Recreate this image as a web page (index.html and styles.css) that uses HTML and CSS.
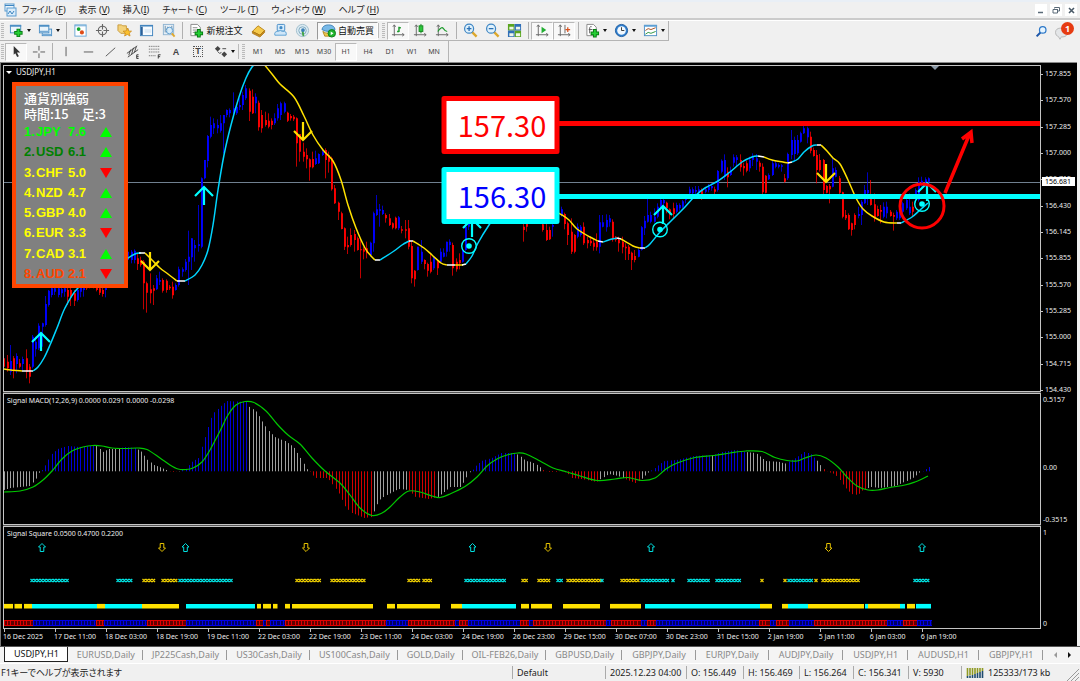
FILE: index.html
```html
<!DOCTYPE html>
<html lang="ja">
<head>
<meta charset="utf-8">
<title>USDJPY,H1</title>
<link rel="stylesheet" href="styles.css">
</head>
<body>
<header class="menubar">
  <svg class="app-icon" viewBox="0 0 14 14"><rect x="2" y="1" width="9" height="7" fill="#eef6fc" stroke="#5a9bd0"/><rect x="4" y="5" width="9" height="8" fill="#d9ecfa" stroke="#5a9bd0"/><path d="M2 2.500h9M5 11l2-3 2 3 2-3" fill="none" stroke="#3c84c0"/></svg>
  <nav class="menu">
    <button>ファイル (<u>F</u>)</button><button>表示 (<u>V</u>)</button><button>挿入(<u>I</u>)</button><button>チャート (<u>C</u>)</button><button>ツール (<u>T</u>)</button><button>ウィンドウ (<u>W</u>)</button><button>ヘルプ (<u>H</u>)</button>
  </nav>
  <div class="window-controls">
    <button aria-label="最小化"><svg viewBox="0 0 12 12"><path d="M3 8.500h5" stroke="#5a6a78" stroke-width="1.500"/></svg></button>
    <button aria-label="元に戻す"><svg viewBox="0 0 12 12"><path d="M4.500 4.500v-1h5v3.500h-1.500M3 5.500h4.500v3.500h-4.500zM3 5.500h5" fill="none" stroke="#5a6a78"/></svg></button>
    <button aria-label="閉じる"><svg viewBox="0 0 12 12"><path d="M4 4l5 5M9 4l-5 5" stroke="#4a5a68" stroke-width="1.600"/></svg></button>
  </div>
</header>

<div class="toolbar toolbar-main">
  <div class="tools">
    <span class="grip"></span>
    <button class="tool drop" aria-label="新規チャート"><svg viewBox="0 0 16 16"><rect x="1.500" y="2.500" width="11" height="8" fill="#eef6fc" stroke="#4c8fc4"/><path d="M1 3h12" stroke="#4c8fc4" stroke-width="2"/><path d="M10 6v9M5.500 10.500h9" stroke="#087d14" stroke-width="4"/><path d="M10 7v7M6.500 10.500h7" stroke="#25cf35" stroke-width="2"/></svg><i></i></button>
    <button class="tool drop" aria-label="チャートの組表示"><svg viewBox="0 0 16 16"><rect x="4.500" y="6.500" width="10" height="7" fill="#d5e8f6" stroke="#4c8fc4"/><rect x="1.500" y="2.500" width="10" height="8" fill="#eaf4fb" stroke="#4c8fc4"/><path d="M1 3h11" stroke="#4c8fc4" stroke-width="2"/><path d="M2 9h9M5 12.500h9" stroke="#76aad5" stroke-width="1.500"/></svg><i></i></button>
    <span class="sep"></span>
    <button class="tool" aria-label="気配値"><svg viewBox="0 0 16 16"><rect x="2" y="2" width="12" height="12" fill="#fff" stroke="#69a6d5"/><path d="M2 3h12" stroke="#69a6d5"/><circle cx="6" cy="6.500" r="2" fill="#14a52a"/><circle cx="9.500" cy="10" r="2.200" fill="#e04b16"/></svg></button>
    <button class="tool" aria-label="データウィンドウ"><svg viewBox="0 0 16 16"><circle cx="8" cy="8" r="4.500" fill="none" stroke="#666" stroke-width="1.200"/><path d="M8 1v6M8 9v6M1 8h6M9 8h6" stroke="#666" stroke-width="1.200"/></svg></button>
    <button class="tool" aria-label="ナビゲーター"><svg viewBox="0 0 16 16"><path d="M1 2h4l1 1h4v3h2v5H4L1 8z" fill="#f4d27a" stroke="#c99a3a"/><path d="M11 5.500l1.300 3 3.200.2-2.400 2 .8 3.200-2.900-1.700-2.900 1.700.8-3.200-2.400-2 3.200-.2z" fill="#fbc02d" stroke="#c98a1c" stroke-width=".8"/></svg></button>
    <button class="tool" aria-label="ターミナル"><svg viewBox="0 0 16 16"><rect x="1.500" y="2.500" width="13" height="11" fill="#f6fbff" stroke="#3f83bd"/><path d="M2 3h12" stroke="#3f83bd" stroke-width="1.500"/><path d="M3 4v9" stroke="#2a5f97" stroke-width="2"/><path d="M6 7.500h7M6 9.500h7" stroke="#c6dcef"/></svg></button>
    <button class="tool" aria-label="ストラテジーテスター"><svg viewBox="0 0 16 16"><rect x="2.500" y="1.500" width="11" height="11" fill="#e6eff6" stroke="#8eb3d1"/><path d="M4.500 3v7M7 4v6M11.500 3v5" stroke="#6d8ea8"/><circle cx="9" cy="8" r="3.500" fill="#d5ecfb" fill-opacity=".8" stroke="#5f9ccd"/><path d="M11.500 11l3 3.500" stroke="#e3a92a" stroke-width="2"/></svg></button>
    <span class="sep"></span>
    <button class="tool labeled"><svg viewBox="0 0 16 16"><path d="M2 1.500h7l3 3v9H2z" fill="#fff" stroke="#888"/><path d="M4 5h5M4 7.500h5M4 10h3" stroke="#888"/><path d="M10.500 6.500v9M6 11h9" stroke="#087d14" stroke-width="4"/><path d="M10.500 7.500v7M7 11h7" stroke="#25cf35" stroke-width="2"/></svg>新規注文</button>
    <button class="tool" aria-label="メタエディター"><svg viewBox="0 0 16 16"><path d="M1.500 9l6-6 7 5-5 5z" fill="#f5c94a" stroke="#b98316"/><path d="M1.500 9v2l8 4 5-5V8l-5 5z" fill="#c98f1b" stroke="#a87212" stroke-width=".8"/></svg></button>
    <button class="tool" aria-label="コミュニティ"><svg viewBox="0 0 16 16"><rect x="4.500" y="1.500" width="8" height="7" rx="1" fill="#d7ecfb" stroke="#4189c5"/><circle cx="8.500" cy="5" r="1.700" fill="#4189c5"/><path d="M2 13q-1-4 3-4 3-2 5 0 5-1 4 4z" fill="#cfe6f8" stroke="#5a9fd2"/></svg></button>
    <button class="tool" aria-label="シグナル"><svg viewBox="0 0 16 16"><circle cx="8" cy="8" r="6.500" fill="#dcebf3" stroke="#9fbdcc"/><circle cx="8" cy="8" r="4" fill="none" stroke="#7fa9bf"/><path d="M8 8l1 6" stroke="#41a447" stroke-width="2"/><circle cx="8.500" cy="7.500" r="2" fill="#3a7fb5"/></svg></button>
    <button class="tool labeled auto pressed"><svg viewBox="0 0 16 16"><path d="M2 9q6 4 12 0l-2 5H4z" fill="#efc84a" stroke="#b18a26"/><path d="M1 7q1-5 7-5t7 5q-7 4-14 0z" fill="#78b9e8" stroke="#3b82b8"/><circle cx="11.500" cy="11" r="4" fill="#20b62c" stroke="#0e7d1a"/><path d="M10.300 9v4l3-2z" fill="#fff"/></svg>自動売買</button>
    <span class="grip wide"></span>
    <button class="tool pressed" aria-label="バーチャート"><svg viewBox="0 0 16 16"><path d="M3.500 2v12M1 12.500h13M2 4l1.500-2L5 4M12 11l2 1.500-2 1.500" fill="none" stroke="#666"/><path d="M8.500 9.500V4M8.500 5h2M6.500 9h2" stroke="#1a9a2a" stroke-width="1.500"/></svg></button>
    <button class="tool" aria-label="ローソク足"><svg viewBox="0 0 16 16"><path d="M3.500 2v12M1 12.500h13M2 4l1.500-2L5 4M12 11l2 1.500-2 1.500" fill="none" stroke="#666"/><path d="M8.500 1v10" stroke="#14891f"/><rect x="6.500" y="3" width="4" height="6" fill="#2cc63c" stroke="#14891f"/></svg></button>
    <button class="tool" aria-label="ラインチャート"><svg viewBox="0 0 16 16"><path d="M3.500 2v12M1 12.500h13M2 4l1.500-2L5 4M12 11l2 1.500-2 1.500" fill="none" stroke="#666"/><path d="M3 9q4-6 6-3t4 3" fill="none" stroke="#1a9a2a" stroke-width="1.200"/></svg></button>
    <span class="sep"></span>
    <button class="tool" aria-label="ズームイン"><svg viewBox="0 0 16 16"><path d="M9.500 9.500l5 5" stroke="#dca72c" stroke-width="2.500"/><circle cx="6.500" cy="6" r="4.800" fill="#dff1fc" stroke="#3e86c4" stroke-width="1.300"/><path d="M6.500 3.500v5M4 6h5" stroke="#2a70b4" stroke-width="1.400"/></svg></button>
    <button class="tool" aria-label="ズームアウト"><svg viewBox="0 0 16 16"><path d="M9.500 9.500l5 5" stroke="#dca72c" stroke-width="2.500"/><circle cx="6.500" cy="6" r="4.800" fill="#dff1fc" stroke="#3e86c4" stroke-width="1.300"/><path d="M4 6h5" stroke="#2a70b4" stroke-width="1.400"/></svg></button>
    <button class="tool" aria-label="整列"><svg viewBox="0 0 16 16"><path d="M1 1h7v7H1zM8 8h7v7H8z" fill="#5aa51f"/><path d="M8 1h7v7H8zM1 8h7v7H1z" fill="#2f6fb8"/><path d="M2.500 4h4.500v3H2.500zM9.500 4H14v3H9.500zM2.500 11h4.500v3H2.500zM9.500 11H14v3H9.500z" fill="#eef6e8"/></svg></button>
    <span class="sep"></span>
    <button class="tool pressed" aria-label="自動スクロール"><svg viewBox="0 0 16 16"><path d="M3.500 2v12M1 12.500h13M2 4l1.500-2L5 4M12 11l2 1.500-2 1.500" fill="none" stroke="#666"/><path d="M7 4v7l5-3.500z" fill="#22ae32"/></svg></button>
    <button class="tool pressed" aria-label="チャートシフト"><svg viewBox="0 0 16 16"><path d="M3.500 2v12M1 12.500h13M2 4l1.500-2L5 4M12 11l2 1.500-2 1.500M8.500 2v9" fill="none" stroke="#666"/><path d="M9 7h5M11.500 4.500v5" fill="none" stroke="#d8501c" stroke-width="1.300"/></svg></button>
    <span class="sep"></span>
    <button class="tool drop" aria-label="インディケータ"><svg viewBox="0 0 16 16"><path d="M2 1.500h7l3 3v9H2z" fill="#fff" stroke="#888"/><path d="M5 11V5q1-2 2-1M4 7h4" fill="none" stroke="#555"/><path d="M10.500 6.500v9M6 11h9" stroke="#087d14" stroke-width="4"/><path d="M10.500 7.500v7M7 11h7" stroke="#25cf35" stroke-width="2"/></svg><i></i></button>
    <button class="tool drop" aria-label="時間足"><svg viewBox="0 0 16 16"><circle cx="8" cy="8" r="6.500" fill="#2f7fcf" stroke="#1e5c9e"/><circle cx="8" cy="8" r="4.600" fill="#f1f8fe"/><path d="M8 4.500V8h3" fill="none" stroke="#333"/></svg><i></i></button>
    <button class="tool drop" aria-label="定型チャート"><svg viewBox="0 0 16 16"><rect x="1.500" y="2.500" width="13" height="11" fill="#fff" stroke="#4c8fc4"/><path d="M1 3h14" stroke="#5c9fd4" stroke-width="2"/><path d="M2.500 8l3-2 3 1 5-2" fill="none" stroke="#a34c1c"/><path d="M2.500 12l3-2 3 1 5-2" fill="none" stroke="#27923c"/></svg><i></i></button>
  </div>
  <div class="right-tools">
    <button aria-label="検索"><svg viewBox="0 0 16 16"><path d="M7 9l-5 5" stroke="#1d56a8" stroke-width="2.500"/><circle cx="9.500" cy="6" r="4" fill="#e7f5ff" stroke="#2d78c8" stroke-width="1.500"/></svg></button>
    <button class="chat" aria-label="メッセージ"><svg viewBox="0 0 20 20"><path d="M2 10q0-6 8-6t8 6-8 6q-1 0-2 3-1-3-3-4-3-1-3-5z" fill="#e4e6e8" stroke="#aaa"/></svg><b>1</b></button>
  </div>
</div>

<div class="toolbar toolbar-draw">
  <div class="tools">
    <span class="grip"></span>
    <button class="tool pressed" aria-label="カーソル"><svg viewBox="0 0 16 16"><path d="M5 2l7 7H8.500l2 4-1.800.8-2-4L5 11.500z" fill="#333"/></svg></button>
    <button class="tool" aria-label="十字カーソル"><svg viewBox="0 0 16 16"><path d="M8.500 2v5M8.500 10v5M2 8.500h5M10 8.500h5" stroke="#555"/></svg></button>
    <span class="sep"></span>
    <button class="tool" aria-label="垂直線"><svg viewBox="0 0 16 16"><path d="M7.500 3v10" stroke="#555"/></svg></button>
    <button class="tool" aria-label="水平線"><svg viewBox="0 0 16 16"><path d="M3 8.500h10" stroke="#555"/></svg></button>
    <button class="tool" aria-label="トレンドライン"><svg viewBox="0 0 16 16"><path d="M3 13L13 4" stroke="#555"/></svg></button>
    <button class="tool" aria-label="等間隔チャネル"><svg viewBox="0 0 16 16"><path d="M2 10L13 2M3 14L14 6M4 12l2-6M7 11l2-7M10 9l2-6" stroke="#444"/><path d="M14.500 11.500h-2v4h2M12.500 13.500h2" fill="none" stroke="#333"/></svg></button>
    <button class="tool" aria-label="フィボナッチ"><svg viewBox="0 0 16 16"><path d="M2 2.500h12M2 5.500h12M2 8.500h12M2 12.500h8" stroke="#555" stroke-dasharray="1 1"/><path d="M14.500 11.500h-2.500v4M12 13.500h2" fill="none" stroke="#333"/></svg></button>
    <button class="tool letter" aria-label="文字">A</button>
    <button class="tool letter" aria-label="テキストラベル"><span class="dotted">T</span></button>
    <button class="tool drop" aria-label="矢印"><svg viewBox="0 0 16 16"><path d="M5 2l3 3-3 3-3-3z" fill="#444"/><path d="M5 8l2 2 2-1M10 5l4 0" fill="none" stroke="#444"/><path d="M12 8l3 3-3 3-3-3z" fill="#444"/></svg><i></i></button>
    <span class="grip wide"></span>
    <button class="tool">M1</button><button class="tool">M5</button><button class="tool">M15</button><button class="tool">M30</button><button class="tool pressed">H1</button><button class="tool">H4</button><button class="tool">D1</button><button class="tool">W1</button><button class="tool">MN</button>
  </div>
</div>

<main class="chart-window">
  <section class="panel">
    <div class="plot">
      <svg id="price" viewBox="4 66 1036 325"></svg>
      <h1 class="plot-title symbol">USDJPY,H1</h1>
      <aside class="strength">
        <p>通貨別強弱</p>
        <p>時間:15　足:3</p>
        <ol>
          <li class="lime"><span>1.</span><span>JPY</span><span>7.6</span><i class="up"></i></li>
          <li class="green"><span>2.</span><span>USD</span><span>6.1</span><i class="up"></i></li>
          <li><span>3.</span><span>CHF</span><span>5.0</span><i class="down"></i></li>
          <li><span>4.</span><span>NZD</span><span>4.7</span><i class="up"></i></li>
          <li><span>5.</span><span>GBP</span><span>4.0</span><i class="up"></i></li>
          <li><span>6.</span><span>EUR</span><span>3.3</span><i class="down"></i></li>
          <li><span>7.</span><span>CAD</span><span>3.1</span><i class="up"></i></li>
          <li class="orange"><span>8.</span><span>AUD</span><span>2.1</span><i class="down"></i></li>
        </ol>
      </aside>
    </div>
    <div class="axis price-axis">
      <span>157.855</span><span>157.570</span><span>157.285</span><span>157.000</span><span>156.715</span><span>156.430</span><span>156.145</span><span>155.855</span><span>155.570</span><span>155.285</span><span>155.000</span><span>154.715</span><span>154.430</span>
      <b class="current">156.681</b>
    </div>
  </section>
  <section class="panel">
    <div class="plot">
      <svg id="macd" viewBox="4 394 1036 130"></svg>
      <h2 class="plot-title">Signal MACD(12,26,9) 0.0000 0.0291 0.0000 -0.0298</h2>
    </div>
    <div class="axis"><span>0.5157</span><span class="zero">0.00</span><span>-0.3515</span></div>
  </section>
  <section class="panel">
    <div class="plot">
      <svg id="square" viewBox="4 527 1036 101"></svg>
      <h2 class="plot-title">Signal Square 0.0500 0.4700 0.2200</h2>
    </div>
    <div class="axis"><span>1</span><span>0</span></div>
  </section>
  <div class="times">
    <span>16 Dec 2025</span><span>17 Dec 11:00</span><span>18 Dec 03:00</span><span>18 Dec 19:00</span><span>19 Dec 11:00</span><span>22 Dec 03:00</span><span>22 Dec 19:00</span><span>23 Dec 11:00</span><span>24 Dec 03:00</span><span>24 Dec 19:00</span><span>26 Dec 23:00</span><span>29 Dec 15:00</span><span>30 Dec 07:00</span><span>30 Dec 23:00</span><span>31 Dec 15:00</span><span>2 Jan 19:00</span><span>5 Jan 11:00</span><span>6 Jan 03:00</span><span>6 Jan 19:00</span>
  </div>
</main>

<nav class="tabs">
  <button class="active">USDJPY,H1</button><button>EURUSD,Daily</button><button>JP225Cash,Daily</button><button>US30Cash,Daily</button><button>US100Cash,Daily</button><button>GOLD,Daily</button><button>OIL-FEB26,Daily</button><button>GBPUSD,Daily</button><button>GBPJPY,Daily</button><button>EURJPY,Daily</button><button>AUDJPY,Daily</button><button>USDJPY,H1</button><button>AUDUSD,H1</button><button>GBPJPY,H1</button>
  <div class="tab-scroll"><button aria-label="前へ"><i class="prev"></i></button><button aria-label="次へ"><i class="next"></i></button></div>
</nav>

<footer class="status">
  <span class="help">F1キーでヘルプが表示されます</span>
  <span class="profile">Default</span>
  <span class="date">2025.12.23 04:00</span>
  <span class="quote">O: 156.449</span>
  <span class="quote">H: 156.469</span>
  <span class="quote">L: 156.264</span>
  <span class="quote">C: 156.341</span>
  <span class="volume">V: 5930</span>
  <span class="traffic"><svg viewBox="0 0 19 12"><path d="M1.500 1v8M4 1v7M6.500 1v7M9 1v6M11.500 1v5M14 1v4M16.500 1v3" stroke="#8f9a22" stroke-width="1.600"/><path d="M1.500 9v2M4 8.500v2.500M6.500 8v3M9 7v4M11.500 6v5M14 5v6M16.500 4v7" stroke="#1f4b6e" stroke-width="1.600"/></svg>125333/173 kb</span>
  <svg class="resize" viewBox="0 0 12 12"><path d="M0 12L12 0M4 12l8-8M8 12l4-4" stroke="#999"/></svg>
</footer>
<script src="chart.js"></script>
</body>
</html>
```

FILE: styles.css
```css
* { box-sizing: border-box; }
body {
  margin: 0;
  min-height: 100vh;
  display: flex;
  flex-direction: column;
  background: #f0f0f0;
  border-top: 2px solid #e9eff6;
  color: #222;
  font-family: "Noto Sans", "Noto Sans CJK JP", sans-serif;
  font-size: 9px;
  overflow: hidden;
}
button { border: 0; padding: 0; margin: 0; background: none; color: inherit; font: inherit; }
svg { display: block; }

/* menu */
.menubar { display: flex; align-items: center; height: 18px; border-bottom: 2px solid #cbcbcb; padding-left: 3px; }
.app-icon { width: 14px; height: 14px; margin-right: 5px; }
.menu { display: flex; gap: 13px; line-height: 16px; white-space: nowrap; font-feature-settings: "palt"; }
.window-controls { display: flex; gap: 3px; margin-left: auto; padding-right: 3px; }
.window-controls button { width: 12px; height: 12px; background: #fff; }

/* toolbars */
.toolbar { display: flex; justify-content: space-between; height: 21px; }
.toolbar-main { border-top: 1px solid #fff; }
.tools { display: flex; align-items: center; border-right: 1px solid #b4b4b4; border-bottom: 1px solid #b4b4b4; }
.toolbar-draw .tools { border-bottom: 0; font-size: 7px; padding-right: 3px; }
.tool { width: 22px; height: 18px; display: flex; align-items: center; justify-content: center; white-space: nowrap; color: #444; }
.tool svg { width: 15px; height: 15px; flex: none; }
.tool.pressed { background: #f8f8f8; border: 1px solid #b8b8b8; border-right-color: #fff; border-bottom-color: #fff; }
.tool.drop { width: 29px; gap: 3px; }
.tool.drop i { border: 2px solid transparent; border-top: 3px solid #111; border-bottom: 0; }
.tool.labeled { width: 62px; gap: 2px; color: #111; }
.tool.auto { width: 61px; margin-left: 4px; border-color: #999; border-right-color: #fff; border-bottom-color: #fff; }
.tool.letter { font: bold 9px "Liberation Sans", sans-serif; }
.dotted { border: 1px dotted #555; width: 10px; line-height: 9px; }
.sep { width: 6px; height: 17px; background: linear-gradient(#b0b0b0, #b0b0b0) center / 1px 100% no-repeat; }
.grip { width: 5px; height: 15px; background: repeating-linear-gradient(#bbb 0 1px, #eee 1px 2px) center / 3px 100% no-repeat; }
.grip.wide { width: 9px; border-left: 1px solid #bbb; }
.right-tools { display: flex; align-items: center; gap: 6px; padding-right: 6px; }
.right-tools svg { width: 13px; height: 13px; }
.chat { position: relative; width: 20px; height: 18px; }
.right-tools .chat svg { width: 15px; height: 15px; margin-top: 3px; }
.chat b { position: absolute; top: 0; right: 0; width: 13px; height: 13px; border-radius: 50%; background: #e63b12; color: #fff; font-size: 9px; line-height: 13px; text-align: center; }

/* charts */
.chart-window { background: #000; margin-right: 3px; border-top: 1px solid #888; border-left: 1px solid #777; padding: 2px 0 0 2px; color: #ececec; font-size: 7px; }
.panel { display: grid; grid-template-columns: minmax(0, 1fr) 36px; margin-bottom: 1px; }
.plot { position: relative; border: 1px solid #c4c4c4; }
.panel:nth-of-type(-n+2) .plot { box-shadow: 0 1px 0 #555; }
.panel:nth-of-type(3) { margin-bottom: 0; }
.plot svg { width: 100%; }
.plot-title { position: absolute; left: 3px; top: 2px; margin: 0; font-size: 7px; line-height: 9px; font-weight: 400; }
.plot-title.symbol { left: 12px; top: 1px; font-size: 8px; }
.symbol::before { content: ""; position: absolute; left: -10px; top: 4px; border: 3px solid transparent; border-top: 3px solid #fff; border-bottom: 0; }
.axis { position: relative; display: flex; flex-direction: column; justify-content: space-between; line-height: 8px; padding: 3px 0 1px 2px; }
.axis span { position: relative; }
.price-axis { margin: 2px 0 -2px; padding: 3px 0 0 4px; }
.price-axis span::before { content: ""; position: absolute; left: -4px; top: 4px; width: 2px; height: 1px; background: #c4c4c4; }
.axis .zero { padding-top: 16px; }
.current { position: absolute; left: 1px; top: 110px; width: 33px; padding-left: 3px; line-height: 9px; background: #fff; color: #000; font-weight: 400; }
.times { display: grid; grid-template-columns: repeat(19, 1fr); width: 90.200%; height: 17px; line-height: 10px; white-space: nowrap; }
.times span { background: linear-gradient(#c4c4c4, #c4c4c4) 1px 0 / 1px 3px no-repeat; padding-top: 3px; }

.strength { position: absolute; left: 8px; top: 16px; width: 116px; padding: 4px 8px 0; border: 4px solid #ff4500; background: #808080; }
.strength p { margin: 0; color: #fff; font: 500 13px/16px "Noto Sans CJK JP", sans-serif; white-space: nowrap; }
.strength ol { list-style: none; margin: 0; padding: 0; display: grid; height: 162px; color: #ff0; font: bold 13px/16px "Liberation Sans", sans-serif; }
.strength li { display: grid; grid-template-columns: 12px 32px 32px 12px; align-items: center; }
.strength i { border: 6px solid transparent; }
.strength .up { border-top: 0; border-bottom: 10px solid #0f0; }
.strength .down { border-bottom: 0; border-top: 10px solid #f00; }
.strength .lime { color: #0f0; }
.strength .green { color: #008000; }
.strength .orange { color: #ff4500; }
.price-label { font: 29px "Noto Sans CJK JP", sans-serif; text-anchor: middle; }

/* chart tabs */
.tabs { display: flex; height: 17px; padding-left: 4px; border-top: 1px solid #555; background: #f4f4f4; color: #888; white-space: nowrap; }
.tabs > button { position: relative; flex: 0 1 auto; padding: 0 8px 1px 9px; }
.tabs > button:nth-child(n+9) { padding: 0 10px 1px; }
.tabs > button::after { content: ""; position: absolute; right: 0; top: 3px; width: 1px; height: 10px; background: #999; }
.tabs > .active { background: #fff; color: #111; border: 1px solid #222; border-top: 0; height: 15px; }
.tabs > .active::after { content: none; }
.tab-scroll { display: flex; margin-left: auto; padding-right: 4px; }
.tab-scroll button { width: 14px; display: grid; place-items: center; }
.prev, .next { border: 3px solid transparent; }
.prev { border-left: 0; border-right-color: #999; }
.next { border-right: 0; border-left-color: #111; }

/* status bar */
.status { position: relative; flex: 1; min-height: 18px; display: grid; grid-template-columns: 1fr 93px 81px 57px 56px 54px 55px 53px 119px; align-items: center; white-space: nowrap; border-top: 1px solid #fff; }
.status span { line-height: 13px; padding-left: 4px; border-left: 1px solid #aaa; }
.status .help { border: 0; padding-left: 1px; font-feature-settings: "palt"; }
.status .traffic { display: flex; align-items: center; gap: 3px; }
.traffic svg { width: 19px; height: 12px; }
.resize { position: absolute; right: 1px; bottom: 0; width: 12px; height: 12px; }
```

FILE: chart.js
```js
const STEP = 3.19;

/* Runs of candles: x3, then per bar "colour wickTop bodyTop bodyBottom wickBottom", in thirds of a pixel below y=60. */
const RUNS = [
  [13, `r877,895,920,955 r885,905,925,935 b855,903,935,945 r888,895,930,955 b880,888,912,940 r897,910,920,925 b890,897,912,930 r868,895,935,955 r912,920,950,970 b825,830,920,925 b830,845,868,890 b790,797,865,870 b788,790,800,860 b708,732,795,800 b690,692,735,740 b680,685,705,712 b680,685,695,705 b675,685,705,712 b680,688,700,712 b680,685,695,710 r675,690,710,735 r680,690,712,738 r690,700,722,738 b680,690,720,725 b670,680,695,712 b665,675,690,710 r660,670,685,690 r660,670,680,685 r660,670,682,685 r670,680,690,694 r675,685,698,705 r680,690,702,710 b670,680,690,712`],
  [385, `b570,575,600,612 b570,575,600,610 b568,572,600,610 r580,595,612,630 r590,600,615,620 r600,605,670,748 r665,670,698,758 r640,688,700,730 r675,685,692,735 b645,655,688,690 b635,660,665,675 r655,660,692,698 r658,662,690,698 r675,680,685,690 r665,680,706,716 b670,675,690,692 b620,628,675,680 b622,628,635,650 b597,605,630,635 b512,590,605,675 b535,535,592,630 b540,555,565,605 b435,553,558,575 b352,355,560,565 b300,300,355,358 b225,228,303,322 b170,195,230,235 b175,190,205,222 b178,195,205,220 b165,190,212,218 b165,165,190,280 b148,150,165,172 b145,150,160,172 b97,145,160,170 b135,140,160,165 b115,135,142,150 b95,105,135,150 b75,85,115,120 r85,92,155,183 r88,110,160,162 b100,110,130,160 r122,128,202,212 r150,165,205,218 r155,180,195,200 r160,182,200,205 r175,182,195,208 b160,175,190,195 b132,145,175,182 b125,130,165,180 b125,130,155,160 r155,158,182,186 r162,168,175,182 r165,170,178,183 r172,175,250,320`],
  [901, `r222,222,275,305 r248,275,290,305 r265,285,298,325 r295,298,322,362 r275,297,322,325 b272,295,312,315 b280,282,310,312 b265,275,285,288 r265,270,300,355 r275,285,305,338 r290,295,388,392 r375,385,430,432 r425,428,455,480 r455,460,507,508 r502,505,560,570 r530,555,562,582 r505,525,555,560 r510,522,540,575 r530,535,570,572 r535,568,570,655 r560,568,575,598 r545,565,580,595 b545,548,585,590 b455,460,550,575 b405,448,465,468 b432,448,452,500 b437,450,462,465 r460,465,475,488 r462,475,495,498 r487,490,503,508 r470,473,505,508 b468,472,505,510 r498,508,512,520 r480,508,512,535 r480,505,560,568 r545,558,655,670 r630,632,658,680 b560,560,630,632 b540,575,605,612 r598,600,612,628 r608,612,632,650 r580,605,635,640 b590,590,625,630 r600,605,625,645 b565,575,605,610 b565,578,590,592 b545,545,575,590 b538,545,555,575 r548,555,625,647 r595,605,628,635 r580,600,610,628 b565,570,605,608 b490,500,570,572 b470,480,500,510`],
  [1572, `r490,500,510,545 r480,490,500,515`],
  [1630, `r490,493,510,515 r490,510,540,543 r500,510,538,540 b490,495,500,530`],
  [1686, `b440,448,465,470 r458,462,492,508 r485,490,525,555 r475,515,575,582 r522,525,575,580 b490,500,530,535 b495,500,525,530 r487,500,550,555 r530,540,550,565 r530,542,550,558 r535,548,560,572 r520,545,562,572 b465,487,560,580 b465,487,500,502 b463,480,502,515 b465,475,487,500 r478,485,535,545 r528,530,540,545 r530,540,550,575 r530,545,562,580 r550,560,565,600 r555,560,582,600 r575,578,600,630 r570,588,600,607 b565,570,590,592 b498,502,570,572 b468,482,505,525 b415,465,485,488 b455,465,485,490 b445,470,485,488 b430,440,470,475 b415,420,440,445 b415,420,430,440 r425,428,445,460 r445,448,465,478 r428,445,462,475 b428,435,455,460 b430,435,445,452 b420,424,440,445 b405,410,420,430 b380,388,400,415 b382,388,400,410 b378,390,395,408 b378,388,395,402 r385,390,402,420 b380,388,395,400 b372,380,390,397 b370,378,385,392 r380,388,395,405 b330,333,390,395 b298,302,335,340 b283,300,350,360 r322,335,352,382 b320,330,345,348 b283,292,308,320 b285,292,300,318 r283,300,322,335 r308,318,325,347 r302,310,332,337 b290,300,325,335 b280,290,300,318 b282,295,305,330 r302,308,320,335 r310,320,397,402 r345,347,398,400 b340,345,358,360 b300,310,345,348 b302,310,320,325 b310,315,320,325 b312,316,320,335 r342,355,365,368 b278,282,355,360 b210,240,285,298 b230,240,282,305 b225,240,280,285 b215,220,245,248 b198,205,220,222 b200,205,232,250 r215,230,272,280 r263,270,288,290 r270,285,330,370 r282,300,330,335 r297,300,390,402 r375,378,398,400 r372,378,388,430 b290,325,380,382 b322,330,350,352 r348,355,398,405 r395,397,470,475 r450,465,475,480 r460,465,508,510 r488,490,510,527 r460,465,495,508 b440,462,468,475 b420,425,465,495 b375,390,430,432 b337,390,400,435 r360,415,435,437 r400,433,472,485 r437,447,468,470 r435,450,455,490 b427,440,470,475 b425,440,460,475 r450,455,468,470 r458,465,470,512 b450,455,475,480 b425,440,475,480 b425,430,455,460 b405,420,445,450 b400,440,460,465 r425,440,455,470 b385,390,420,430 b352,365,420,425 b350,362,372,380 b352,358,368,380 b352,355,365,372`]
];

/* Moving average: colour letter followed by its points; each part joins the next. */
const AVERAGE = [
  ['y', '4,369 11,370 22,371'], ['w', '22,371 33,371'],
  ['c', '33,371 38,367 44,358 50,345 57,328 65,308 77,289 95,276 115,265 128,258 135,254 141,253'],
  ['w', '139,253 145,253'],
  ['y', '145,253 152,260 160,268 168,274 177,281'], ['w', '177,281 185,281'],
  ['c', '185,281 195,275 202,265 208,250 213,225 218,190 224,155 231,125 239,97 246,78 252,67 256,64'],
  ['y', '263,63 272,74 280,84 294,97 304,116 313,135 323,150 333,161 341,180 348,205 356,228 365,248 371,256 375,260'],
  ['w', '375,260 380,260'], ['c', '380,260 394,251 402,245 409,241'], ['w', '409,241 413,241'],
  ['y', '413,241 424,248 432,255 441,263 447,265'], ['w', '447,265 455,265'], ['y', '455,265 463,265'], ['w', '462,265 466,264'],
  ['c', '466,264 472,256 478,243 489,225 500,210'],
  ['y', '556,212 562,215 569,220 577,229 590,237 598,241'], ['w', '598,241 603,242'],
  ['c', '603,242 612,239 617,238'], ['w', '617,238 621,239'], ['y', '621,239 633,246 640,248'], ['w', '640,248 645,248'],
  ['c', '645,248 650,244 660,232 672,220 685,207 695,196 705,188 718,181 730,172 742,162 752,157 758,156'],
  ['w', '758,156 764,157'], ['y', '764,157 772,160 783,162 788,163'], ['w', '788,163 792,162'],
  ['c', '792,162 798,159 804,152 812,146 817,145'], ['w', '817,145 821,145'],
  ['y', '821,145 827,151 833,158 840,164 848,180 856,198 863,209 872,216 884,222 897,223'], ['w', '897,223 901,223'],
  ['c', '901,223 912,217 920,210 928,203']
];

const INK = { r: '#ff0000', b: '#0000ff', y: '#ffe100', w: '#ffffff', c: '#00d5ff' };
const CYAN = '#00ffff';
const parse = s => s.trim().split(/\s+/).map(p => p.split(',').map(Number));

function smooth(points) {
  let d = `M${points[0]}`;
  for (let i = 0; i < points.length - 1; i++) {
    const a = points[i - 1] || points[i], b = points[i], c = points[i + 1], e = points[i + 2] || c;
    d += `C${b[0] + (c[0] - a[0]) / 6},${b[1] + (c[1] - a[1]) / 6} ${c[0] - (e[0] - b[0]) / 6},${c[1] - (e[1] - b[1]) / 6} ${c}`;
  }
  return d;
}

function drawPrice() {
  let out = '<path d="M4 182.500H1040" stroke="#708090"/>';
  for (const [start, bars] of RUNS) {
    bars.split(' ').forEach((bar, i) => {
      const [wt, bt, bb, wb] = bar.slice(1).split(',').map(v => 60 + v / 3);
      const x = Math.round(start / 3 + i * STEP);
      const ink = INK[bar[0]];
      out += `<path d="M${x - 0.5} ${wt}V${wb}" stroke="${ink}" opacity=".75"/><path d="M${x} ${bt}V${Math.max(bb, bt + 1)}" stroke="${ink}" stroke-width="2" opacity=".95"/>`;
    });
  }
  for (const [ink, pts] of AVERAGE) out += `<path d="${smooth(parse(pts))}" fill="none" stroke="${INK[ink]}" stroke-width="1.500"/>`;
  for (const [x, y] of [[41, 332], [204, 186], [472, 218], [663, 205], [927, 182]])
    out += `<path d="M${x} ${y + 19}V${y + 1}M${x - 9} ${y + 10}L${x} ${y + 1}l9 9" fill="none" stroke="${CYAN}" stroke-width="2.200"/>`;
  for (const [x, y] of [[150, 272], [303, 142], [826, 184]])
    out += `<path d="M${x} ${y - 20}v18M${x - 9} ${y - 11}L${x} ${y - 2}l9 -9" fill="none" stroke="#ffe100" stroke-width="2.200"/>`;
  for (const [x, y] of [[469, 246], [660, 229.5], [922, 204]])
    out += `<circle cx="${x}" cy="${y}" r="7.300" fill="none" stroke="${CYAN}" stroke-width="1.400"/><circle cx="${x}" cy="${y}" r="2.800" fill="${CYAN}"/>`;
  out += `<path d="M558 123.500H1040" stroke="#f00" stroke-width="5"/><path d="M558 196.500H1040" stroke="${CYAN}" stroke-width="5"/>
    <circle cx="922" cy="206" r="22" fill="none" stroke="#f00" stroke-width="3"/>
    <path d="M945 193L970 133M962 139L971 132L972 143" fill="none" stroke="#f00" stroke-width="3.500"/>
    <path d="M931 66h8l-4 4z" fill="#8c9aa8"/>
    <rect x="444" y="98.500" width="113" height="53" fill="#fff" stroke="#f00" stroke-width="5" stroke-linejoin="round"/>
    <rect x="444" y="169.500" width="113" height="52" fill="#fff" stroke="${CYAN}" stroke-width="5" stroke-linejoin="round"/>
    <text class="price-label" x="502" y="137" fill="#f00">157.30</text>
    <text class="price-label" x="502" y="208" fill="#00f">156.30</text>`;
  document.getElementById('price').innerHTML = out;
}

const HISTOGRAM = parse(`4,490 11,488 20,487 30,486 36,479 39,473 42,471 46,465 52,454 58,449 68,446 80,447 90,446 97,446 103,452 109,449 117,449 125,447 135,448 141,451 148,460 154,465 160,467 167,470 173,472 180,471 186,469 192,462 199,458 202,447 205,438 211,419 215,412 221,406 227,401 247,402 250,407 257,412 263,422 269,431 275,437 285,441 294,447 301,458 307,469 310,471 313,475 317,478 328,478 332,483 339,493 346,507 352,513 365,518 372,517 377,505 381,499 387,495 399,489 409,490 416,497 429,499 438,497 451,487 461,487 466,479 469,473 473,470 476,466 482,461 492,458 502,453 515,453 519,455 526,461 532,462 539,466 543,470 549,472 556,472 562,471 568,473 572,478 582,479 597,482 601,479 609,474 619,476 625,479 636,483 641,480 645,476 648,473 654,469 660,464 665,461 677,460 694,456 714,455 722,452 736,450 746,452 756,453 766,461 781,462 785,464 790,461 796,458 805,452 811,454 818,461 823,468 826,471 835,474 838,477 845,487 852,494 858,495 863,490 872,487 880,488 896,486 909,480 915,477 919,473 923,471 928,468 931,466`);
const HISTOGRAM_INK = [[40, 's'], [95, 'b'], [120, 's'], [137, 'b'], [168, 's'], [178, 'r'], [182, 's'], [248, 'b'], [309, 's'], [372, 'r'], [409, 's'], [436, 'r'], [471, 's'], [516, 'b'], [543, 's'], [599, 'r'], [624, 's'], [640, 'r'], [650, 's'], [712, 'b'], [715, 's'], [745, 'b'], [789, 's'], [815, 'b'], [824, 's'], [866, 'r'], [921, 's'], [940, 'b']];
const SIGNAL = parse(`4,492 20,491 33,487 43,480 52,471 62,459 72,451 83,447 93,445.5 102,446 112,448 125,448.5 138,448 147,449.5 160,458 170,465 178,469 186,469.5 193,468 202,462 210,450 220,431 228,415 236,405 245,401.5 254,402.5 266,411 277,424 288,435 300,444 312,458 325,471 340,483 350,495 360,508 372,515.5 382,513 390,507 400,497 409,491 420,492 432,496 440,497.5 450,494 465,486.5 477,477 487,466 497,459 507,455 518,453 526,454 540,461 553,468 567,472 580,476 597,480.5 615,479 628,477.5 642,480.5 655,478 666,469 677,463 695,457.5 714,455.5 730,453 746,451 762,451.5 775,457.5 787,460.5 797,461 805,458 816,455 826,458 838,467 847,477 857,486 868,490 878,490 890,487.5 905,485 915,482 922,479 928,476`);

function drawMacd() {
  let out = '';
  for (let i = 0; i < 291; i++) {
    const x = 4.3 + i * STEP;
    const k = HISTOGRAM.findIndex(p => p[0] > x);
    if (k < 1) continue;
    const [x0, y0] = HISTOGRAM[k - 1], [x1, y1] = HISTOGRAM[k];
    const y = y0 + (y1 - y0) * (x - x0) / (x1 - x0);
    const key = HISTOGRAM_INK.find(r => x < r[0])[1];
    const ink = { s: '#a0a0a0', b: '#0000d8', r: '#d00000' }[key];
    out += `<path d="M${Math.floor(x) + 0.5} 471.300V${y}" stroke="${ink}"/>`;
  }
  out += `<path d="${smooth(SIGNAL)}" fill="none" stroke="#00c800" stroke-width="1.200"/>`;
  document.getElementById('macd').innerHTML = out;
}

const CROSSES = 'c30-69 c116-133 y142-155 y161-178 c178-232 y295-321 y330-366 y407-420 y422-433 c464-506 y521-528 y537-551 c556-563 y566-600 c600-605 y620-640 c640-668 c671-675 c687-710 c715-742 y760-764 y783-787 c787-812 y814-818 y821-860 c913-930';
const BANDS = 'y4-13 y14.5-22 y24-32 c32-97 y97-105 c105-142 y142-179 c186-255 y257-261 y263-271 y273-277.5 y285-290 y292-373 y387-395 y397-440 y451-462 c462-516 y521-529 y531-552 y563-600 y610-641 c645-760 y760-772 y782-788 c788-808 y808-864 c865-868 y868-900 c900-905 y907-915 c916-931';
const SQUARES = 'r4-33 b33-96 r96-104 b104-147 r147-186 b186-256 r256-263 b263-266 r266-270 b270-285 r285-386 b386-408 r408-455 b455-459 r459-468 b468-520 r520-529 b529-533 r533-606 b606-611 r611-641 b641-647 r647-656 b656-759 r759-770 b770-776 r776-789 b789-814 r814-887 b887-903 r903-917 b917-932';
const ranges = s => s.split(' ').map(r => [r[0], ...r.slice(1).split('-').map(Number)]);

function drawSquares() {
  let out = '';
  for (const [ink, a, b] of ranges(CROSSES)) {
    let d = '';
    for (let x = a + 0.5; x < b - 1.5; x += STEP) d += `M${x} 579l3 3M${x + 3} 579l-3 3`;
    out += `<path d="${d}" stroke="${ink === 'c' ? '#00e5e5' : '#f0d000'}" stroke-width="1.200"/>`;
  }
  for (const [ink, a, b] of ranges(BANDS)) out += `<path d="M${a} 606.200H${b}" stroke="${ink === 'c' ? CYAN : '#ffe100'}" stroke-width="4.600"/>`;
  for (const [ink, a, b] of ranges(SQUARES)) {
    let d = '';
    for (let x = a + 0.5; x < b - 1; x += STEP) d += `M${Math.floor(x) + 0.5} 620v6`;
    out += `<path d="M${a} 623H${b}" stroke="${ink === 'r' ? '#600000' : '#000060'}" stroke-width="6"/><path d="M${a} 620.500H${b}M${a} 625.500H${b}${d}" fill="none" stroke="${ink === 'r' ? '#e00000' : '#0000e8'}"/>`;
  }
  for (const x of [42, 185.5, 472.5, 651, 922]) out += `<path d="M${x} 543.500l3.500 3.500h-1.700v4.500h-3.600v-4.500h-1.700z" fill="none" stroke="#00dede"/>`;
  for (const x of [162, 306, 548, 828.5]) out += `<path d="M${x} 551.500l3.500 -3.500h-1.700v-4.500h-3.600v4.500h-1.700z" fill="none" stroke="#e6c200"/>`;
  document.getElementById('square').innerHTML = out;
}

drawPrice();
drawMacd();
drawSquares();
```
